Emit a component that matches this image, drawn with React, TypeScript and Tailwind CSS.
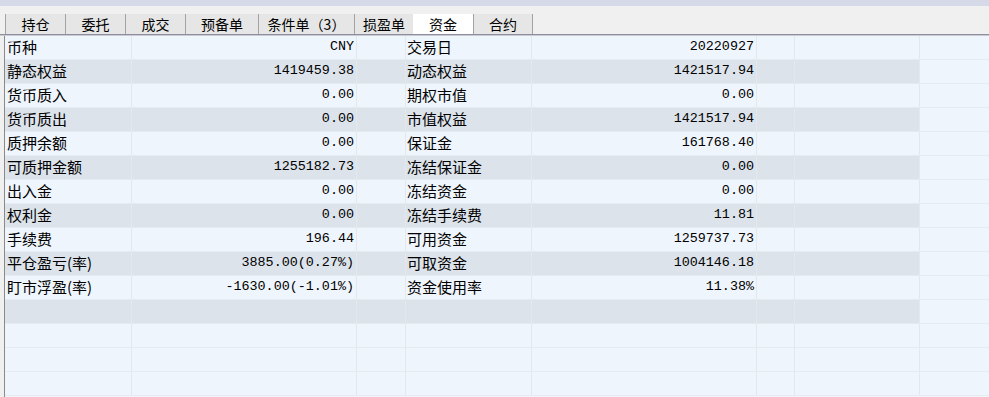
import React from 'react';

const tabs = [
  { label: '持仓', w: 'w-[60px]' },
  { label: '委托', w: 'w-[60px]' },
  { label: '成交', w: 'w-[60px]' },
  { label: '预备单', w: 'w-[73px]' },
  { label: '条件单（3）', w: 'w-[96px]' },
  { label: '损盈单', w: 'w-[59px]' },
  { label: '资金', w: 'w-[60px]', active: true },
  { label: '合约', w: 'w-[60px]', last: true },
];

const rows: string[][] = [
  ['币种', 'CNY', '交易日', '20220927'],
  ['静态权益', '1419459.38', '动态权益', '1421517.94'],
  ['货币质入', '0.00', '期权市值', '0.00'],
  ['货币质出', '0.00', '市值权益', '1421517.94'],
  ['质押余额', '0.00', '保证金', '161768.40'],
  ['可质押金额', '1255182.73', '冻结保证金', '0.00'],
  ['出入金', '0.00', '冻结资金', '0.00'],
  ['权利金', '0.00', '冻结手续费', '11.81'],
  ['手续费', '196.44', '可用资金', '1259737.73'],
  ['平仓盈亏(率)', '3885.00(0.27%)', '可取资金', '1004146.18'],
  ['盯市浮盈(率)', '-1630.00(-1.01%)', '资金使用率', '11.38%'],
  ['', '', '', ''],
  ['', '', '', ''],
  ['', '', '', ''],
  ['', '', '', ''],
];

const cjk = "font-['Noto_Sans_CJK_SC',sans-serif]";
const mono = "font-['Liberation_Mono','Noto_Sans_CJK_SC',monospace]";

function Row({ cells, odd }: { cells: string[]; odd: boolean }) {
  const bg = odd ? 'bg-[#dce3eb]' : 'bg-[#eff5fc]';
  const cell = 'h-full border-r border-[#e4e8ee] flex items-center shrink-0';
  return (
    <div className="flex h-[24px] border-b border-[#e7ebf0]">
      <div className={`${cell} ${bg} w-[127px] pl-[2px] text-[15px] ${cjk}`}>{cells[0]}</div>
      <div className={`${cell} ${bg} w-[225px] justify-end pr-[2px] text-[13.4px] ${mono}`}>{cells[1]}</div>
      <div className={`${cell} ${bg} w-[49px]`} />
      <div className={`${cell} ${bg} w-[126px] pl-[1px] text-[15px] ${cjk}`}>{cells[2]}</div>
      <div className={`${cell} ${bg} w-[225px] justify-end pr-[2px] text-[13.4px] ${mono}`}>{cells[3]}</div>
      <div className={`${cell} ${bg} w-[38px]`} />
      <div className={`${cell} ${bg} w-[125px]`} />
      <div className="h-full flex-1 bg-[#eff5fc]" />
    </div>
  );
}

export default function App() {
  return (
    <div className="w-[989px] h-[397px] overflow-hidden bg-[#f0f0f0] text-black flex flex-col">
      <div className="h-[6px] bg-[#d6d9e8]" />
      <div className="h-[28px] flex items-end pl-[5px]">
        {tabs.map((t) => (
          <div
            key={t.label}
            className={`h-[20px] ${t.w} flex items-center justify-center text-[14px] ${cjk} ${
              t.active ? 'bg-white' : 'bg-[#e6e6e6] border-l border-[#a3a3a3]'
            } ${t.last ? 'border-r border-[#a3a3a3]' : ''}`}
          >
            {t.label}
          </div>
        ))}
      </div>
      <div className="h-px bg-[#8e8e9c]" />
      <div className="h-px bg-[#c9cad4]" />
      <div className="flex-1 flex">
        <div className="w-[4px]" />
        <div className="w-px bg-[#8a8a8a]" />
        <div className="flex-1 flex flex-col bg-[#eff5fc]">
          {rows.map((r, i) => (
            <Row key={i} cells={r} odd={i % 2 === 1 && i < 12} />
          ))}
        </div>
      </div>
    </div>
  );
}
